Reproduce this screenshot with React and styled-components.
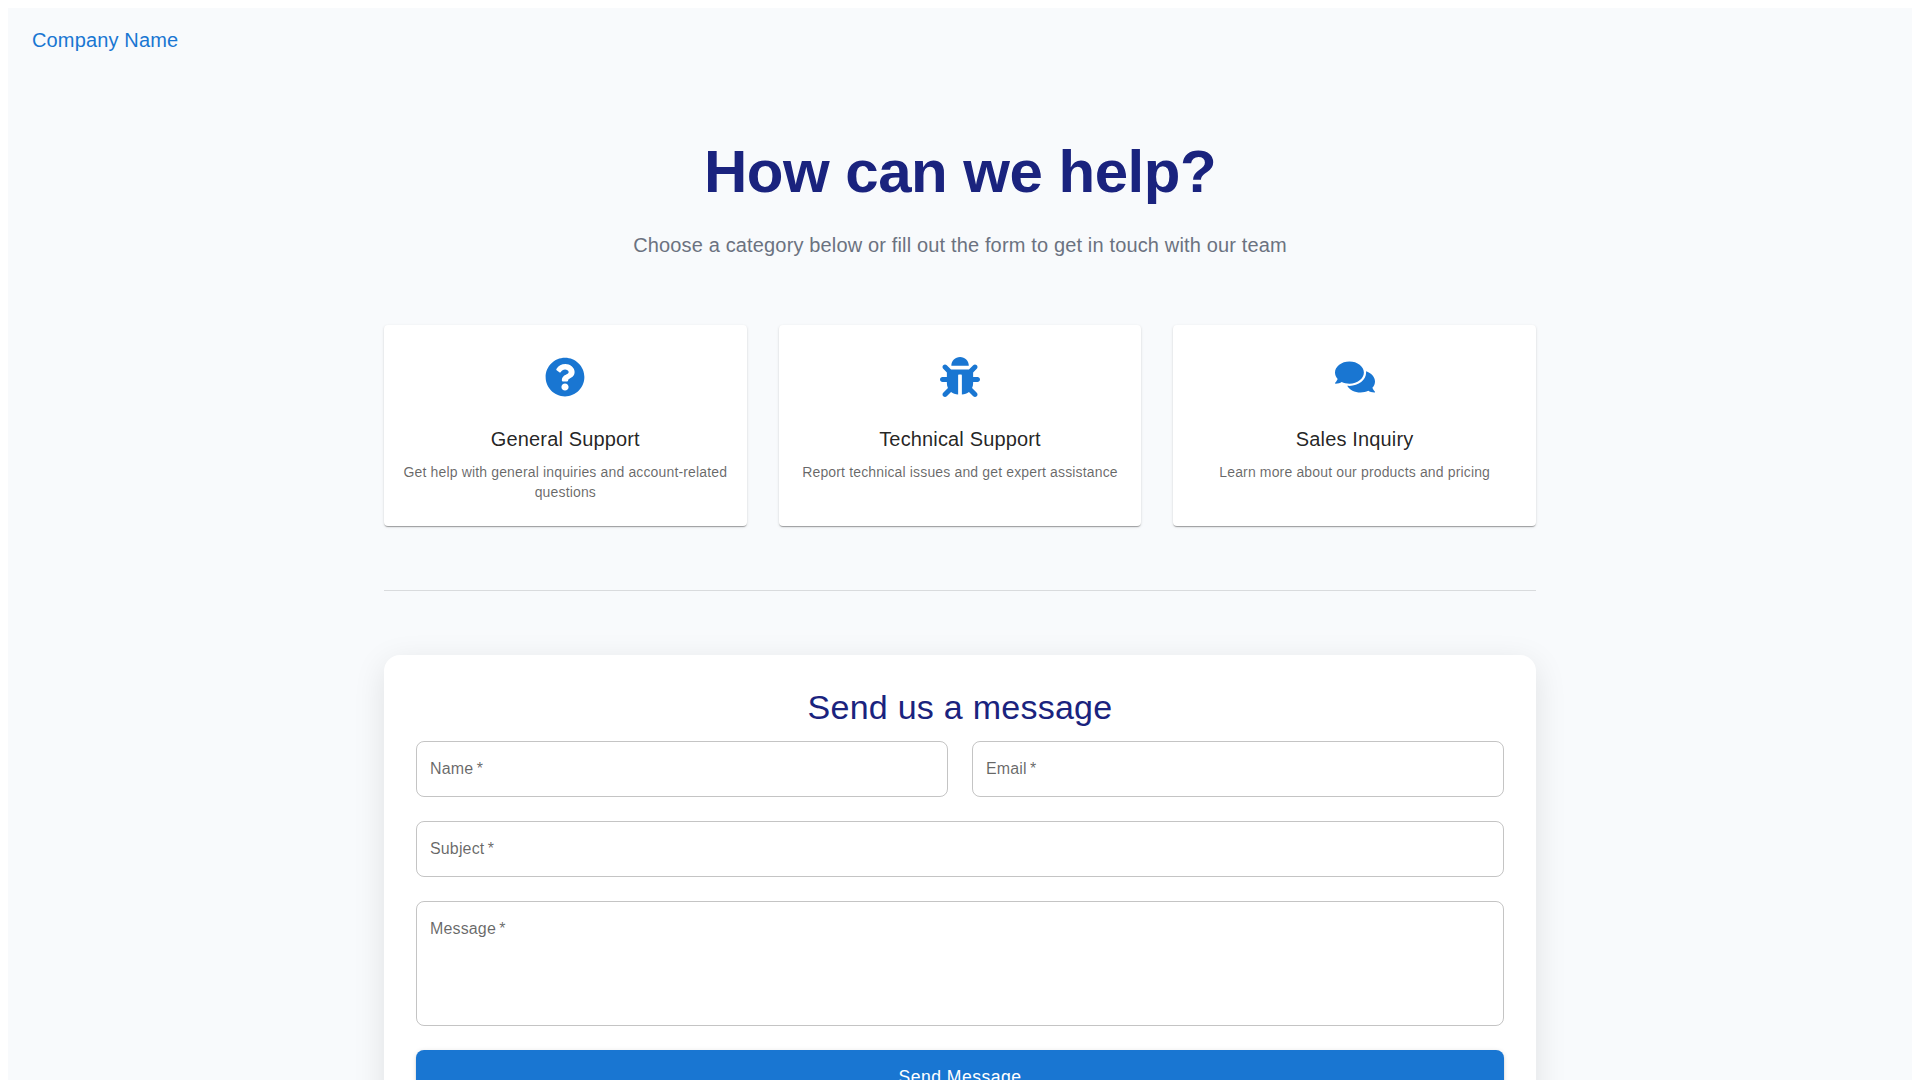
import { createGlobalStyle } from "styled-components";
import styled from "styled-components";
import { FaQuestionCircle, FaBug, FaComments } from "react-icons/fa";

const categories = [
    {
        title: "General Support",
        text: "Get help with general inquiries and account-related questions",
        Icon: FaQuestionCircle,
    },
    {
        title: "Technical Support",
        text: "Report technical issues and get expert assistance",
        Icon: FaBug,
    },
    {
        title: "Sales Inquiry",
        text: "Learn more about our products and pricing",
        Icon: FaComments,
    },
]

const Field = ({ label, name, multiline }) => (
    <FieldStyled $tall={multiline}>
        <span>{label}&thinsp;*</span>
        {multiline ? <textarea name={name} required /> : <input name={name} required />}
    </FieldStyled>
)

const App = () => {
    const handleSubmit = (e) => {
        e.preventDefault()
    }

    return (
        <PageStyled>
            <GlobalStyle />
            <Toolbar>
                <Brand href="#">Company Name</Brand>
            </Toolbar>
            <Container>
                <Title>How can we help?</Title>
                <Subtitle>Choose a category below or fill out the form to get in touch with our team</Subtitle>
                <Cards>
                    {categories.map(({ title, text, Icon }) => (
                        <Card key={title}>
                            <Icon size={40} />
                            <h6>{title}</h6>
                            <p>{text}</p>
                        </Card>
                    ))}
                </Cards>
                <Divider />
                <FormStyled onSubmit={handleSubmit}>
                    <h4>Send us a message</h4>
                    <FieldRow>
                        <Field label="Name" name="name" />
                        <Field label="Email" name="email" />
                    </FieldRow>
                    <Field label="Subject" name="subject" />
                    <Field label="Message" name="message" multiline />
                    <SubmitButton type="submit">Send Message</SubmitButton>
                </FormStyled>
            </Container>
        </PageStyled>
    )
}

const GlobalStyle = createGlobalStyle`
  *, *::before, *::after{
    box-sizing: border-box;
  }
  html{
    scrollbar-width: none;
  }
  body{
    margin: 8px;
    background: #fff;
    font-family: "Liberation Sans", Arial, sans-serif;
  }
  h1, h4, h6, p{
    margin: 0;
    font-weight: 400;
  }
`;

const PageStyled = styled.div`
  min-height: 100vh;
  background: #f8fafc;
`;

const Toolbar = styled.header`
  display: flex;
  align-items: center;
  height: 64px;
  padding: 0 24px;
`;

const Brand = styled.a`
  color: #1976d2;
  font-size: 20px;
  line-height: 32px;
  letter-spacing: 0.15px;
  text-decoration: none;
`;

const Container = styled.main`
  display: flex;
  flex-direction: column;
  width: 1200px;
  padding: 64px 24px;
  margin: 0 auto;
`;

const Title = styled.h1`
  margin-bottom: 21px;
  color: #1a237e;
  font-size: 60px;
  font-weight: 700;
  line-height: 72px;
  letter-spacing: -0.5px;
  text-align: center;
`;

const Subtitle = styled.p`
  margin-bottom: 64px;
  color: #6b7280;
  font-size: 20px;
  line-height: 32px;
  letter-spacing: 0.15px;
  text-align: center;
`;

const Cards = styled.section`
  display: grid;
  grid-template-columns: repeat(3, 1fr);
  gap: 32px;
`;

const Card = styled.article`
  display: flex;
  flex-direction: column;
  align-items: center;
  height: 201px;
  padding: 32px 16px 24px;
  background: #fff;
  border-radius: 4px;
  box-shadow: 0 2px 1px -1px rgba(0, 0, 0, 0.2), 0 1px 1px 0 rgba(0, 0, 0, 0.14), 0 1px 3px 0 rgba(0, 0, 0, 0.12);
  text-align: center;
  svg{
    color: #1976d2;
  }
  h6{
    margin: 26px 0 7px;
    color: rgba(0, 0, 0, 0.87);
    font-size: 20px;
    line-height: 32px;
    letter-spacing: 0.15px;
  }
  p{
    color: rgba(0, 0, 0, 0.6);
    font-size: 14px;
    line-height: 20px;
    letter-spacing: 0.15px;
  }
`;

const Divider = styled.hr`
  width: 100%;
  margin: 64px 0;
  border: 0;
  border-top: 1px solid rgba(0, 0, 0, 0.12);
`;

const FormStyled = styled.form`
  display: flex;
  flex-direction: column;
  gap: 24px;
  padding: 32px;
  background: #fff;
  border-radius: 16px;
  box-shadow: 0 8px 32px rgba(0, 0, 0, 0.1);
  h4{
    margin-bottom: -10px;
    color: #1a237e;
    font-size: 34px;
    line-height: 40px;
    letter-spacing: 0.25px;
    text-align: center;
  }
`;

const FieldRow = styled.div`
  display: grid;
  grid-template-columns: 1fr 1fr;
  gap: 24px;
`;

const FieldStyled = styled.label`
  display: flex;
  height: ${({ $tall }) => ($tall ? "125px" : "56px")};
  padding: 15px 13px;
  border: 1px solid rgba(0, 0, 0, 0.23);
  border-radius: 8px;
  span{
    color: rgba(0, 0, 0, 0.6);
    font-size: 16px;
    line-height: 23px;
    letter-spacing: 0.15px;
    white-space: nowrap;
  }
  input, textarea{
    flex: 1;
    min-width: 0;
    padding: 0;
    border: none;
    outline: none;
    resize: none;
    background: transparent;
    font: inherit;
  }
`;

const SubmitButton = styled.button`
  padding: 12px 24px;
  border: none;
  border-radius: 8px;
  background: #1976d2;
  box-shadow: 0 3px 1px -2px rgba(0, 0, 0, 0.2), 0 2px 2px 0 rgba(0, 0, 0, 0.14), 0 1px 5px 0 rgba(0, 0, 0, 0.12);
  color: #fff;
  font-family: inherit;
  font-size: 17.6px;
  line-height: 30.8px;
  letter-spacing: 0.46px;
  cursor: pointer;
`;

export default App
